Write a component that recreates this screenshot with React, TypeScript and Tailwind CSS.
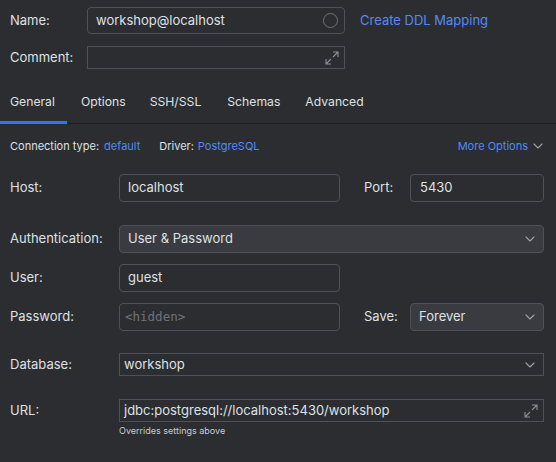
import React from "react";

const Chevron = ({ className = "" }: { className?: string }) => (
  <svg width="10" height="6" viewBox="0 0 10 6" className={className} fill="none">
    <path d="M1 1l4 4 4-4" stroke="#9da0a8" strokeWidth="1.1" strokeLinecap="round" strokeLinejoin="round" />
  </svg>
);

const Expand = () => (
  <svg width="14" height="14" viewBox="0 0 14 14" fill="none">
    <path d="M8 1h5v5M13 1L8 6M6 13H1V8M1 13l5-5" stroke="#8c8f96" strokeWidth="1.1" />
  </svg>
);

export default function App() {
  const font = { fontFamily: "Inter, 'Noto Sans', sans-serif" };
  return (
    <div className="w-[556px] h-[462px] bg-[#2b2d30] text-[#dfe1e5] text-[13px] overflow-hidden" style={font}>
      {/* Name */}
      <div className="flex items-center pt-[7px] pl-[10px]">
        <div className="w-[77px]">Name:</div>
        <div className="w-[258px] h-[27px] border border-[#4e5157] rounded-[4px] flex items-center pl-[8px] pr-[6px]">
          <span className="flex-1">workshop@localhost</span>
          <span className="w-[15px] h-[15px] rounded-full border border-[#6f737a]"></span>
        </div>
        <div className="ml-[15px] text-[#548af7]">Create DDL Mapping</div>
      </div>
      {/* Comment */}
      <div className="flex items-center mt-[12px] pl-[10px]">
        <div className="w-[77px]">Comment:</div>
        <div className="w-[258px] h-[23px] border border-[#4e5157] flex items-center justify-end pr-[5px]">
          <Expand />
        </div>
      </div>
      {/* Tabs */}
      <div className="mt-[12px] border-b border-[#1e1f22] flex text-[12.2px]">
        <div className="flex items-center h-[42px] w-full">
          <div className="w-[67px] h-full flex items-center pl-[10px] relative">
            General
            <div className="absolute left-0 right-0 bottom-[-1px] h-[3px] bg-[#3574f0]"></div>
          </div>
          <div className="ml-[14px]">Options</div>
          <div className="ml-[24px]">SSH/SSL</div>
          <div className="ml-[26px]">Schemas</div>
          <div className="ml-[25px]">Advanced</div>
        </div>
      </div>
      {/* Connection type */}
      <div className="flex items-center text-[11px] mt-[15px] pl-[10px] pr-[13px] h-[14px]">
        <span>Connection type:</span>
        <span className="ml-[5px] text-[#548af7]">default</span>
        <span className="ml-[19px]">Driver:</span>
        <span className="ml-[4px] text-[#548af7]">PostgreSQL</span>
        <span className="ml-auto text-[#548af7]">More Options</span>
        <Chevron className="ml-[5px]" />
      </div>
      {/* Host */}
      <div className="flex items-center mt-[21px] pl-[10px]">
        <div className="w-[109px]">Host:</div>
        <div className="w-[221px] h-[28px] border border-[#4e5157] rounded-[4px] flex items-center pl-[8px]">localhost</div>
        <div className="w-[70px] pl-[24px]">Port:</div>
        <div className="w-[134px] h-[28px] border border-[#4e5157] rounded-[4px] flex items-center pl-[9px]">5430</div>
      </div>
      {/* Authentication */}
      <div className="flex items-center mt-[23px] pl-[10px]">
        <div className="w-[109px]">Authentication:</div>
        <div className="w-[425px] h-[28px] border border-[#4e5157] bg-[#393b40] rounded-[4px] flex items-center pl-[8px] pr-[8px]">
          <span className="flex-1">User &amp; Password</span>
          <Chevron />
        </div>
      </div>
      {/* User */}
      <div className="flex items-center mt-[11px] pl-[10px]">
        <div className="w-[109px]">User:</div>
        <div className="w-[221px] h-[28px] border border-[#4e5157] rounded-[4px] flex items-center pl-[8px]">guest</div>
      </div>
      {/* Password */}
      <div className="flex items-center mt-[11px] pl-[10px]">
        <div className="w-[109px]">Password:</div>
        <div
          className="w-[221px] h-[28px] border border-[#4e5157] rounded-[4px] flex items-center pl-[5px] text-[#6f737a] text-[12.5px]"
          style={{ fontFamily: "'DejaVu Sans Mono', monospace" }}
        >
          &lt;hidden&gt;
        </div>
        <div className="w-[70px] pl-[24px]">Save:</div>
        <div className="w-[134px] h-[28px] border border-[#4e5157] bg-[#393b40] rounded-[4px] flex items-center pl-[8px] pr-[8px]">
          <span className="flex-1">Forever</span>
          <Chevron />
        </div>
      </div>
      {/* Database */}
      <div className="flex items-center mt-[22px] pl-[10px]">
        <div className="w-[109px]">Database:</div>
        <div className="w-[425px] h-[23px] border border-[#4e5157] flex items-center pl-[4px] pr-[8px]">
          <span className="flex-1">workshop</span>
          <Chevron />
        </div>
      </div>
      {/* URL */}
      <div className="flex items-center mt-[23px] pl-[10px]">
        <div className="w-[109px]">URL:</div>
        <div className="w-[425px] h-[23px] border border-[#4e5157] flex items-center pl-[4px] pr-[5px]">
          <span className="flex-1">jdbc:postgresql://localhost:5430/workshop</span>
          <Expand />
        </div>
      </div>
      <div className="pl-[119px] mt-[2px] text-[9px] text-[#c9ccd2]">Overrides settings above</div>
    </div>
  );
}
